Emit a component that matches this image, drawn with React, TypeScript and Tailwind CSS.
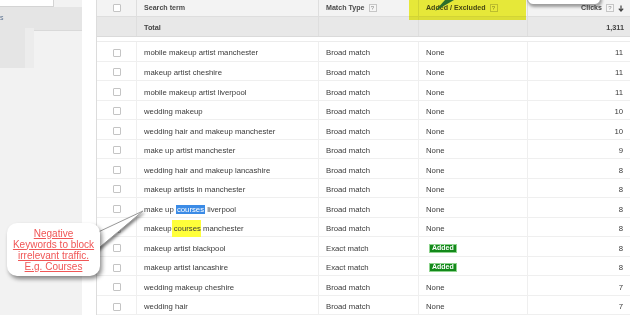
import React from 'react';

// Search terms report with callouts

type Row = { term: React.ReactNode; match: string; status: 'None' | 'Added'; clicks: number };

const rows: Row[] = [
  { term: 'mobile makeup artist manchester', match: 'Broad match', status: 'None', clicks: 11 },
  { term: 'makeup artist cheshire', match: 'Broad match', status: 'None', clicks: 11 },
  { term: 'mobile makeup artist liverpool', match: 'Broad match', status: 'None', clicks: 11 },
  { term: 'wedding makeup', match: 'Broad match', status: 'None', clicks: 10 },
  { term: 'wedding hair and makeup manchester', match: 'Broad match', status: 'None', clicks: 10 },
  { term: 'make up artist manchester', match: 'Broad match', status: 'None', clicks: 9 },
  { term: 'wedding hair and makeup lancashire', match: 'Broad match', status: 'None', clicks: 8 },
  { term: 'makeup artists in manchester', match: 'Broad match', status: 'None', clicks: 8 },
  {
    term: (
      <span>
        make up <span className="bg-[#3b8be6] text-white px-[1px]">courses</span> liverpool
      </span>
    ),
    match: 'Broad match',
    status: 'None',
    clicks: 8,
  },
  {
    term: (
      <span>
        makeup <span className="bg-[#ffff3a] py-[4px] -ml-[2px] pl-[2px]">courses</span> manchester
      </span>
    ),
    match: 'Broad match',
    status: 'None',
    clicks: 8,
  },
  { term: 'makeup artist blackpool', match: 'Exact match', status: 'Added', clicks: 8 },
  { term: 'makeup artist lancashire', match: 'Exact match', status: 'Added', clicks: 8 },
  { term: 'wedding makeup cheshire', match: 'Broad match', status: 'None', clicks: 7 },
  { term: 'wedding hair', match: 'Broad match', status: 'None', clicks: 7 },
];

const Help = () => (
  <span className="inline-flex items-center justify-center w-[8px] h-[8px] border border-[#c6c6c6] bg-[#f6f6f6] text-[6px] leading-none text-[#888] font-normal ml-[4px]">
    ?
  </span>
);

const Check = () => (
  <span className="block w-[8px] h-[8px] border border-[#c4c4c4] bg-white rounded-[1px]" />
);

const cols = 'grid grid-cols-[40px_182px_100px_109px_103px]';

export default function App() {
  return (
    <div
      className="relative w-[630px] h-[315px] overflow-hidden bg-white flex"
      style={{ fontFamily: '"Liberation Sans", Arial, sans-serif' }}
    >
      {/* Sidebar */}
      <div className="w-[82px] shrink-0 bg-[#f2f2f2] flex flex-col">
        <div className="h-[7px] flex bg-[#f2f2f2]">
          <div className="w-[54px] bg-white border-b border-r border-[#d4d4d4]" />
        </div>
        <div className="h-[23px] bg-[#e5e5e5] flex items-center text-[7px] text-[#5b7190]">s</div>
        <div className="h-[38px] flex">
          <div className="w-[25px] bg-[#e5e5e5]" />
          <div className="w-[9px] bg-[#ececec] -mt-[2px]" />
          <div className="flex-1 border-t border-[#d9d9d9]" />
        </div>
      </div>
      <div className="w-[14px] shrink-0 bg-white" />

      {/* Table */}
      <div className="flex-1 border-l border-[#dcdcdc] text-[#3a3a3a] text-[7.75px]">
        <div className={`${cols} h-[17px] bg-[#f3f3f3] border-b border-[#dedede] font-bold text-[7.1px] text-[#4a4a4a]`}>
          <div className="flex items-center justify-center border-r border-[#dedede]"><Check /></div>
          <div className="flex items-center pl-[7px] border-r border-[#dedede]">Search term</div>
          <div className="flex items-center pl-[7px] border-r border-[#dedede]">Match Type<Help /></div>
          <div className="flex items-center pl-[7px] border-r border-[#dedede]">Added / Excluded<Help /></div>
          <div className="flex items-center justify-end pr-[7px]">
            Clicks<Help />
            <svg width="6" height="7" viewBox="0 0 6 7" className="ml-[4px]">
              <path d="M3 0.5V5.5M0.8 3.6L3 6L5.2 3.6" stroke="#444" strokeWidth="1.2" fill="none" />
            </svg>
          </div>
        </div>
        <div className={`${cols} h-[20px] bg-[#e8e8e8] border-b border-[#dadada] font-bold text-[7.3px] text-[#444]`}>
          <div className="border-r border-[#dedede]" />
          <div className="flex items-center pt-[4px] pl-[7px] border-r border-[#dedede]">Total</div>
          <div className="border-r border-[#dedede]" />
          <div className="border-r border-[#dedede]" />
          <div className="flex items-center pt-[4px] justify-end pr-[7px]">1,311</div>
        </div>
        <div className="h-[5px] border-b border-[#ececec]" />
        {rows.map((r, i) => (
          <div key={i} className={`${cols} h-[19.54px] border-b border-[#efefef]`}>
            <div className="flex items-center pt-[3px] justify-center border-r border-[#efefef]"><Check /></div>
            <div className="flex items-center pt-[4px] pl-[7px] border-r border-[#efefef] whitespace-nowrap">{r.term}</div>
            <div className="flex items-center pt-[4px] pl-[7px] border-r border-[#efefef]">{r.match}</div>
            <div className="flex items-center pt-[4px] pl-[7px] border-r border-[#efefef]">
              {r.status === 'Added' ? (
                <span className="ml-[3px] px-[2px] h-[9px] -mt-[1px] flex items-center bg-[#13891a] border border-[#8fd48f] text-white font-bold text-[7px]">
                  Added
                </span>
              ) : (
                'None'
              )}
            </div>
            <div className="flex items-center pt-[4px] justify-end pr-[8px]">{r.clicks}</div>
          </div>
        ))}
      </div>

      {/* Yellow marker over header */}
      <div className="absolute left-[409px] top-0 w-[117px] h-[20px] bg-[#f2f43c] mix-blend-multiply" />

      {/* Green arrow tip */}
      <svg className="absolute left-0 top-0" width="630" height="20">
        <polygon points="435,11 445,0 454,0" fill="#2c6e2c" />
      </svg>

      {/* Top right callout edge */}
      <div className="absolute left-[527px] top-[-22px] w-[74px] h-[27px] bg-white border border-[#a0a0a0] rounded-[6px] shadow-[1px_2px_3px_rgba(0,0,0,0.35)]" />

      {/* Callout tail */}
      <svg className="absolute left-0 top-0 drop-shadow-[1px_2px_1.5px_rgba(0,0,0,0.5)]" width="160" height="315">
        <polygon points="94,234 143,211 94,252" fill="#ffffff" stroke="#999999" strokeWidth="1" />
      </svg>

      {/* Callout box */}
      <div className="absolute left-[7px] top-[223px] w-[93px] h-[53px] bg-white rounded-[10px] shadow-[2px_3px_4px_rgba(0,0,0,0.45)] flex flex-col items-center justify-center text-[10px] leading-[11px] text-[#f05656] underline">
        <span>Negative</span>
        <span>Keywords to block</span>
        <span>irrelevant traffic.</span>
        <span>E.g. Courses</span>
      </div>
    </div>
  );
}
